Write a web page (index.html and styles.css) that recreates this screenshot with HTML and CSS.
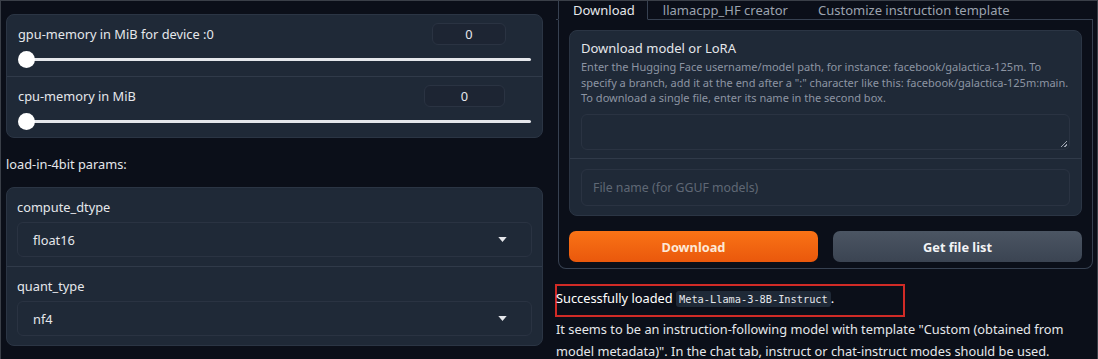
FILE: index.html
```html
<!DOCTYPE html>
<html lang="en">
<head>
    <meta charset="UTF-8">
    <title>Model - Text generation web UI</title>
    <link rel="stylesheet" href="styles.css">
</head>
<body>
    <div class="frame">
        <div class="left-col">
            <div class="panel">
                <div class="slider-row">
                    <div class="row-head">
                        <span class="label">gpu-memory in MiB for device :0</span>
                        <span class="number-box gpu">0</span>
                    </div>
                    <div class="slider"><div class="track"></div><div class="thumb"></div></div>
                </div>
                <div class="slider-row">
                    <div class="row-head">
                        <span class="label">cpu-memory in MiB</span>
                        <span class="number-box cpu">0</span>
                    </div>
                    <div class="slider"><div class="track"></div><div class="thumb"></div></div>
                </div>
            </div>

            <div class="params-title">load-in-4bit params:</div>

            <div class="panel">
                <div class="select-row">
                    <div class="label">compute_dtype</div>
                    <div class="dropdown">
                        <span>float16</span>
                        <svg class="caret" viewBox="0 0 10 6"><path d="M0 0h10L5 6z" fill="currentColor"/></svg>
                    </div>
                </div>
                <div class="select-row">
                    <div class="label">quant_type</div>
                    <div class="dropdown">
                        <span>nf4</span>
                        <svg class="caret" viewBox="0 0 10 6"><path d="M0 0h10L5 6z" fill="currentColor"/></svg>
                    </div>
                </div>
            </div>
        </div>

        <div class="right-col">
            <div class="tab-nav">
                <button class="tab selected">Download</button>
                <button class="tab">llamacpp_HF creator</button>
                <button class="tab">Customize instruction template</button>
            </div>
            <div class="tab-panel">
                <div class="form-block">
                    <div class="form-section">
                        <div class="block-title">Download model or LoRA</div>
                        <div class="block-info">Enter the Hugging Face username/model path, for instance: facebook/galactica-125m. To specify a branch, add it at the end after a ":" character like this: facebook/galactica-125m:main. To download a single file, enter its name in the second box.</div>
                        <div class="textarea"><span class="grip"></span></div>
                    </div>
                    <div class="form-section second">
                        <div class="text-input">File name (for GGUF models)</div>
                    </div>
                </div>
                <div class="button-row">
                    <button class="btn primary">Download</button>
                    <button class="btn secondary">Get file list</button>
                </div>
            </div>

            <div class="status">
                <div class="status-box">Successfully loaded <code>Meta-Llama-3-8B-Instruct</code>.</div>
                <p>It seems to be an instruction-following model with template "Custom (obtained from model metadata)". In the chat tab, instruct or chat-instruct modes should be used.</p>
            </div>
        </div>
    </div>
</body>
</html>
```
FILE: styles.css
```css
* {
    margin: 0;
    padding: 0;
    box-sizing: border-box;
}

body {
    font-family: 'Noto Sans', 'Open Sans', sans-serif;
    background: #0b0f19;
    color: #e5e7eb;
    width: 1098px;
    height: 359px;
    overflow: hidden;
}

.frame {
    height: 359px;
    border: 1px solid #3a3f48;
    border-bottom: none;
    display: grid;
    grid-template-columns: 537px 537px;
    column-gap: 13px;
    padding-left: 5px;
    overflow: hidden;
}

/* left column */

.left-col {
    padding-top: 13px;
}

.panel {
    background: #1f2937;
    border: 1px solid #2b3544;
    border-radius: 8px;
}

.slider-row {
    padding: 8px 11px 0 11px;
    height: 61px;
}

.slider-row + .slider-row {
    border-top: 1px solid #303a49;
}

.row-head {
    display: flex;
    justify-content: space-between;
    align-items: center;
    height: 22px;
}

.label {
    font-size: 12.8px;
    color: #e5e7eb;
}

.number-box {
    height: 22px;
    border: 1px solid #2a3342;
    border-radius: 6px;
    background: #1d2533;
    font-size: 12.8px;
    text-align: center;
    line-height: 20px;
    margin-right: 25px;
}

.number-box.gpu {
    width: 74px;
}

.number-box.cpu {
    width: 81px;
    margin-right: 26px;
}

.slider {
    position: relative;
    height: 28px;
}

.track {
    position: absolute;
    left: 2px;
    right: 0;
    top: 13px;
    height: 3px;
    border-radius: 2px;
    background: #e5e7eb;
}

.thumb {
    position: absolute;
    left: 0;
    top: 6px;
    width: 17px;
    height: 17px;
    border-radius: 50%;
    background: #ffffff;
}

.params-title {
    font-size: 12.8px;
    height: 49px;
    line-height: 52px;
}

.select-row {
    padding: 8px 10px 9px 10px;
}

.select-row + .select-row {
    border-top: 1px solid #303a49;
    padding-bottom: 9px;
}

.select-row .label {
    height: 26px;
    line-height: 22px;
}

.dropdown {
    height: 35px;
    border: 1px solid #2a3342;
    border-radius: 6px;
    background: #1f2937;
    display: flex;
    align-items: center;
    justify-content: space-between;
    padding: 0 24px 0 15px;
    font-size: 12.8px;
}

.caret {
    width: 9px;
    height: 5px;
    color: #e5e7eb;
}

/* right column */

.right-col {
    display: flex;
    flex-direction: column;
}

.tab-nav {
    display: flex;
    height: 19px;
    border-bottom: 1px solid #374151;
    padding-left: 2px;
}

.tab {
    background: none;
    border: 1px solid transparent;
    border-top: none;
    font-family: inherit;
    font-size: 13px;
    line-height: 16px;
    color: #9ca3af;
    padding: 0 14px;
    height: 19px;
}

.tab.selected {
    color: #e5e7eb;
    border-color: #374151;
    border-bottom-color: #0b0f19;
    background: #0b0f19;
    padding-right: 12px;
}

.tab-panel {
    border: 1px solid #374151;
    border-top: none;
    border-radius: 0 0 8px 8px;
    margin-left: 2px;
    padding: 10px 10px 6px 10px;
}

.form-block {
    background: #1f2937;
    border: 1px solid #2b3544;
    border-radius: 8px;
}

.form-section {
    padding: 7px 11px 0 11px;
    height: 127px;
}

.form-section.second {
    border-top: 1px solid #303a49;
    height: 57px;
    padding-top: 10px;
}

.block-title {
    font-size: 13px;
    color: #e5e7eb;
    line-height: 20px;
}

.block-info {
    font-size: 11px;
    line-height: 15.5px;
    color: #8d95a3;
    margin-top: 1px;
    max-width: 488px;
}

.textarea {
    position: relative;
    margin-top: 8px;
    height: 36px;
    border: 1px solid #2a3342;
    border-radius: 6px;
    background: #1f2937;
}

.grip {
    position: absolute;
    right: 2px;
    bottom: 2px;
    width: 6px;
    height: 6px;
    background: linear-gradient(135deg, transparent 45%, #9ca3af 45%, #9ca3af 58%, transparent 58%, transparent 72%, #9ca3af 72%, #9ca3af 85%, transparent 85%);
}

.text-input {
    height: 37px;
    border: 1px solid #2a3342;
    border-radius: 6px;
    padding: 0 11px;
    font-size: 12.3px;
    line-height: 35px;
    color: #5f6875;
}

.button-row {
    display: flex;
    gap: 15px;
    margin-top: 15px;
}

.btn {
    flex: 1;
    height: 31px;
    border: none;
    border-radius: 7px;
    font-family: inherit;
    font-size: 12.8px;
    font-weight: bold;
}

.btn.primary {
    background: linear-gradient(180deg, #f97316 0%, #ea580c 100%);
    color: #fde8d7;
}

.btn.secondary {
    background: linear-gradient(180deg, #4b5563 0%, #3b4452 100%);
    color: #f3f4f6;
}

.status {
    padding-top: 15px;
    font-size: 12.8px;
}

.status-box {
    width: 350px;
    height: 33px;
    border: 2px solid #d12b26;
    margin-left: -1px;
    padding: 3px 0 0 0;
    text-indent: -1px;
    color: #ffffff;
}

.status-box code {
    font-family: 'DejaVu Sans Mono', monospace;
    font-size: 10.3px;
    color: #e5e7eb;
    background: #1f2937;
    border-radius: 3px;
    padding: 2px 3px;
}

.status p {
    margin-top: 1px;
    line-height: 22px;
    color: #e5e7eb;
}
```
